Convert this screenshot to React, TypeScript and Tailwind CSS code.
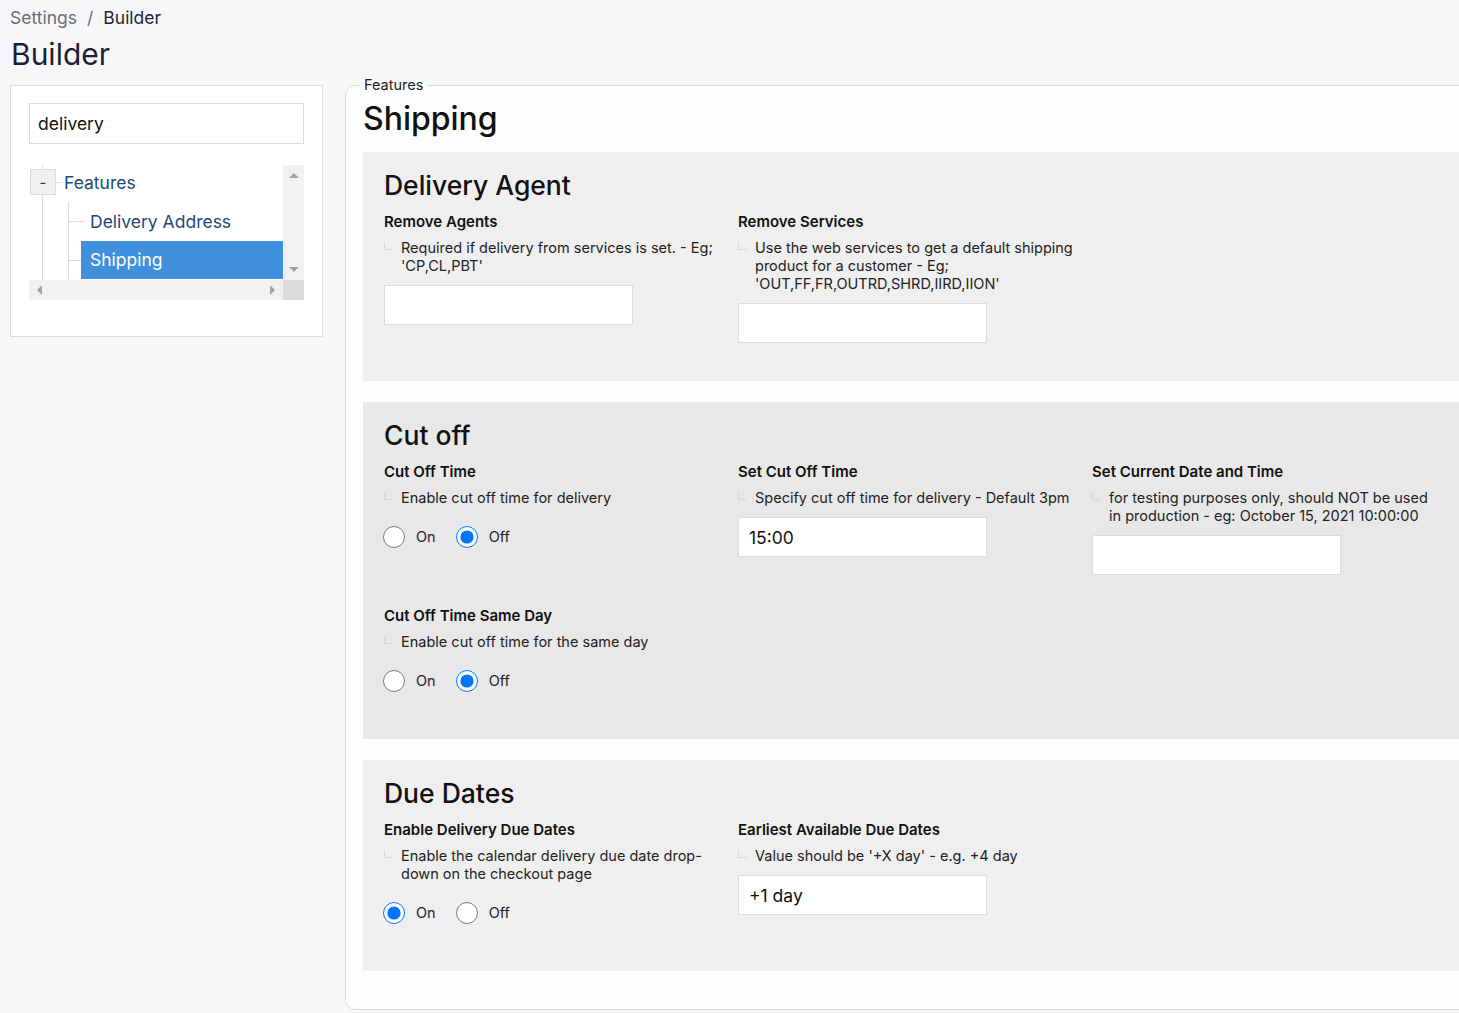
import React from "react";

type Field =
  | { label: string; desc: string; kind: "text"; value?: string }
  | { label: string; desc: string; kind: "radio"; on: boolean; name: string };

type Section = { title: string; tone: string; rows: Field[][] };

const SECTIONS: Section[] = [
  {
    title: "Delivery Agent",
    tone: "bg-[#efefef]",
    rows: [
      [
        {
          label: "Remove Agents",
          desc: "Required if delivery from services is set. - Eg; 'CP,CL,PBT'",
          kind: "text",
        },
        {
          label: "Remove Services",
          desc: "Use the web services to get a default shipping product for a customer - Eg; 'OUT,FF,FR,OUTRD,SHRD,IIRD,IION'",
          kind: "text",
        },
      ],
    ],
  },
  {
    title: "Cut off",
    tone: "bg-[#e8e8e8]",
    rows: [
      [
        {
          label: "Cut Off Time",
          desc: "Enable cut off time for delivery",
          kind: "radio",
          on: false,
          name: "cutoff",
        },
        {
          label: "Set Cut Off Time",
          desc: "Specify cut off time for delivery - Default 3pm",
          kind: "text",
          value: "15:00",
        },
        {
          label: "Set Current Date and Time",
          desc: "for testing purposes only, should NOT be used in production - eg: October 15, 2021 10:00:00",
          kind: "text",
        },
      ],
      [
        {
          label: "Cut Off Time Same Day",
          desc: "Enable cut off time for the same day",
          kind: "radio",
          on: false,
          name: "sameday",
        },
      ],
    ],
  },
  {
    title: "Due Dates",
    tone: "bg-[#efefef]",
    rows: [
      [
        {
          label: "Enable Delivery Due Dates",
          desc: "Enable the calendar delivery due date drop-down on the checkout page",
          kind: "radio",
          on: true,
          name: "duedates",
        },
        {
          label: "Earliest Available Due Dates",
          desc: "Value should be '+X day' - e.g. +4 day",
          kind: "text",
          value: "+1 day",
        },
      ],
    ],
  },
];

const FieldBlock = ({ field }: { field: Field }) => (
  <div className="w-[354px] pr-[11px]">
    <div className="text-[15px] font-semibold leading-[20px] text-[#111]">{field.label}</div>
    <div className="mt-[7px] flex">
      <span className="mt-[3px] h-[8px] w-[9px] shrink-0 border-b border-l border-[#d8d8d8]" />
      <p className="ml-[8px] text-[14.5px] leading-[18px] text-[#222]">{field.desc}</p>
    </div>
    <div className="mt-[10px]">
      {field.kind === "text" ? (
        <input
          readOnly
          value={field.value ?? ""}
          className="h-[40px] w-[249px] border border-[#dcdcdc] bg-white px-[10px] text-[17.5px] text-[#111] outline-none"
        />
      ) : (
        <div className="-ml-[1px] flex h-[40px] items-center text-[14.5px] text-[#222]">
          <input type="radio" name={field.name} defaultChecked={field.on} className="h-[22px] w-[22px]" />
          <span className="ml-[11px]">On</span>
          <input type="radio" name={field.name} defaultChecked={!field.on} className="ml-[20px] h-[22px] w-[22px]" />
          <span className="ml-[11px]">Off</span>
        </div>
      )}
    </div>
  </div>
);

const Tree = () => (
  <div className="mt-[21px] flex h-[135px] w-[275px] flex-col">
    <div className="flex h-[115px]">
      {/* tree viewport */}
      <div className="relative w-[254px] overflow-hidden bg-white text-[17.5px] text-[#1b4a78]">
        <span className="absolute left-[13px] top-0 bottom-0 border-l border-[#dcdcdc]" />
        <div className="relative flex items-center pt-[3px]">
          <span className="ml-[1px] flex h-[26px] w-[26px] items-center justify-center border border-[#dcdcdc] bg-[#efefef] text-[15px] leading-none text-[#333]">
            -
          </span>
          <span className="w-[7px] border-t border-[#dcdcdc]" />
          <span className="ml-[1px] mt-[2px]">Features</span>
        </div>
        <div className="ml-[39px] mt-[6px] border-l border-[#dcdcdc]">
          <div className="flex h-[39px] items-center">
            <span className="w-[16px] border-t border-[#dcdcdc]" />
            <span className="ml-[5px]">Delivery Address</span>
          </div>
          <div className="flex h-[38px] items-center">
            <span className="w-[12px] border-t border-[#dcdcdc]" />
            <span className="flex h-full flex-1 items-center bg-[#4190dd] pl-[9px] text-white">Shipping</span>
          </div>
        </div>
      </div>
      {/* vertical scrollbar */}
      <div className="flex w-[21px] flex-col items-center justify-between bg-[#f1f1f1] py-[8px]">
        <span className="h-0 w-0 border-x-[5px] border-b-[5px] border-x-transparent border-b-[#a3a3a3]" />
        <span className="h-0 w-0 border-x-[5px] border-t-[5px] border-x-transparent border-t-[#a3a3a3]" />
      </div>
    </div>
    <div className="flex h-[20px]">
      <div className="flex w-[254px] items-center justify-between bg-[#f1f1f1] px-[8px]">
        <span className="h-0 w-0 border-y-[5px] border-r-[5px] border-y-transparent border-r-[#a3a3a3]" />
        <span className="h-0 w-0 border-y-[5px] border-l-[5px] border-y-transparent border-l-[#a3a3a3]" />
      </div>
      <div className="w-[21px] bg-[#dcdcdc]" />
    </div>
  </div>
);

export default function App() {
  return (
    <div
      className="min-h-[1013px] overflow-hidden bg-[#f6f7f9] pl-[10px] pt-[4px]"
      style={{ fontFamily: "Inter, 'Noto Sans', sans-serif" }}
    >
      <div className="flex items-center text-[17.5px] leading-[27px]">
        <span className="text-[#6b6b7b]">Settings</span>
        <span className="mx-[10px] text-[#6b6b7b]">/</span>
        <span className="text-[#23233f]">Builder</span>
      </div>
      <h1 className="ml-[1px] mt-[4px] text-[30px] leading-[38px] text-[#1d1d35]">Builder</h1>

      <div className="mt-[12px] flex items-start">
        {/* left panel */}
        <div className="w-[313px] shrink-0 border border-[#dcdcdc] bg-white px-[18px] pb-[36px] pt-[17px]">
          <input
            readOnly
            value="delivery"
            className="h-[41px] w-[275px] border border-[#dcdcdc] bg-white px-[8px] text-[17.5px] text-[#111] outline-none"
          />
          <Tree />
        </div>

        {/* right panel */}
        <fieldset className="-mt-[9px] ml-[22px] mr-[-40px] min-w-0 flex-1 rounded-l-[10px] border border-[#dcdcdc] bg-[#fdfdfd] pb-[38px] pl-[17px] pr-[17px]">
          <legend className="-ml-[3px] px-[4px] text-[14.5px] leading-[18px] text-[#222]">Features</legend>
          <h2 className="mt-[4px] text-[32px] font-medium leading-[41px] text-[#111]">Shipping</h2>
          <div className="mt-[13px] flex flex-col gap-[21px]">
            {SECTIONS.map((s) => (
              <section key={s.title} className={`${s.tone} pb-[38px] pl-[21px] pt-[16px]`}>
                <h3 className="text-[26.5px] font-medium leading-[34px] text-[#111]">{s.title}</h3>
                <div className="mt-[10px] flex flex-col gap-[31px]">
                  {s.rows.map((row, i) => (
                    <div key={i} className="flex items-start">
                      {row.map((f) => (
                        <FieldBlock key={f.label} field={f} />
                      ))}
                    </div>
                  ))}
                </div>
              </section>
            ))}
          </div>
        </fieldset>
      </div>
    </div>
  );
}
